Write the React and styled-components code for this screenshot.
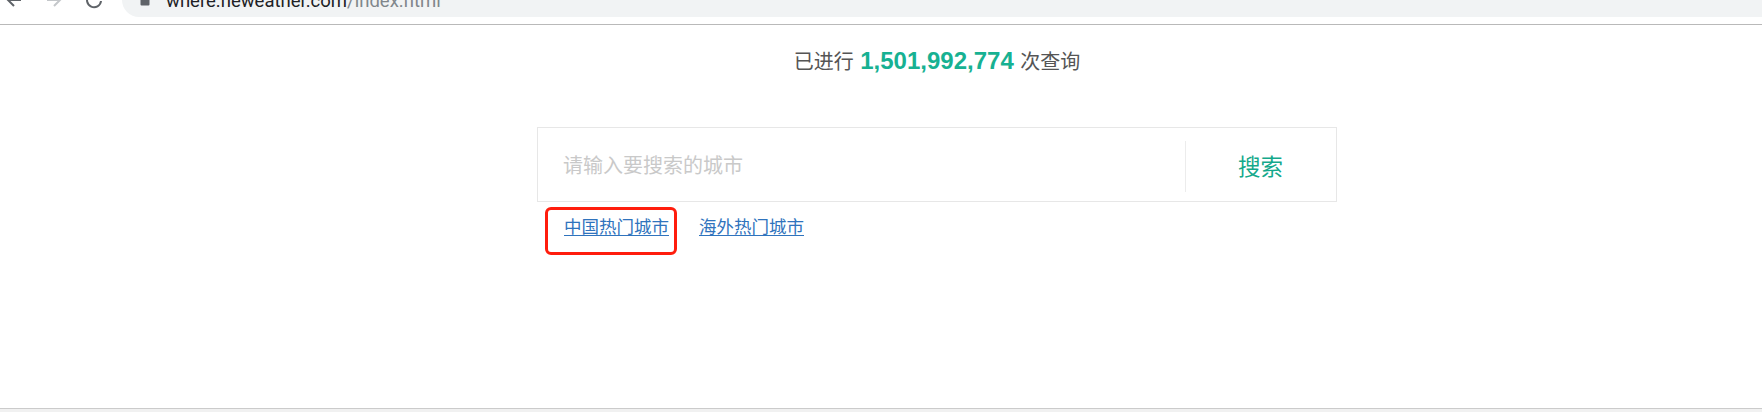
import React from 'react';
import styled, { createGlobalStyle } from 'styled-components';

const GlobalStyle = createGlobalStyle`
    html, body {
        margin: 0;
        padding: 0;
        background: #fff;
    }
    body {
        font-family: "Liberation Sans", "Noto Sans CJK SC", sans-serif;
        overflow: hidden;
    }
`;

const Page = styled.div`
    width: 1762px;
    height: 412px;
    display: flex;
    flex-direction: column;
    overflow: hidden;
`;

const Toolbar = styled.div`
    height: 24px;
    flex: none;
    display: flex;
    align-items: flex-start;
    background: #fff;
    border-bottom: 1px solid #b9b9b9;
    overflow: hidden;
`;

const NavIcon = styled.svg`
    flex: none;
    width: 18px;
    height: 18px;
    margin-top: -9px;
    margin-left: ${({ gap }) => gap}px;
`;

const Omnibox = styled.div`
    flex: 1;
    height: 34px;
    margin-top: -17px;
    margin-left: 19px;
    border-radius: 17px 0 0 17px;
    background: #f1f3f4;
    display: flex;
    align-items: flex-start;
    padding-left: 18px;
`;

const Lock = styled.svg`
    flex: none;
    width: 10px;
    height: 14px;
    margin-top: 9px;
`;

const Url = styled.div`
    margin-left: 16px;
    margin-top: 8px;
    font-family: Roboto, "Liberation Sans", sans-serif;
    font-size: 18.5px;
    line-height: 20px;
    color: #202124;
    white-space: nowrap;
`;

const UrlPath = styled.span`
    color: #80868b;
`;

const Main = styled.div`
    flex: 1;
    padding-top: 21px;
    padding-left: 537px;
`;

const Content = styled.div`
    width: 800px;
`;

const Counter = styled.div`
    text-align: center;
    font-size: 20px;
    line-height: 30px;
    color: #555;
`;

const Count = styled.b`
    font-size: 24px;
    font-weight: 700;
    color: #17b192;
    margin: 0 1px;
`;

const SearchBox = styled.div`
    margin-top: 50px;
    height: 73px;
    border: 1px solid #e7e7e7;
    display: flex;
    align-items: stretch;
`;

const Input = styled.input`
    flex: 1;
    border: none;
    outline: none;
    background: transparent;
    padding: 0 0 0 25px;
    font-family: "Noto Sans CJK SC", sans-serif;
    font-size: 20px;
    color: #333;
    &::placeholder {
        color: #c9c9c9;
    }
`;

const SearchButton = styled.button`
    position: relative;
    width: 151px;
    flex: none;
    border: none;
    background: transparent;
    font-family: "Noto Sans CJK SC", sans-serif;
    font-size: 22.5px;
    color: #14a88b;
    padding: 0;
    &::before {
        content: '';
        position: absolute;
        left: 0;
        top: 13px;
        bottom: 9px;
        border-left: 1px solid #ececec;
    }
`;

const Links = styled.div`
    margin-top: 12px;
    padding-left: 27px;
    display: flex;
    gap: 30px;
`;

const CityLink = styled.a`
    position: relative;
    font-family: "Noto Sans CJK SC", sans-serif;
    font-size: 17.5px;
    line-height: 24px;
    color: #2f73bd;
    text-decoration: underline;
    text-underline-offset: 2px;
    cursor: pointer;
`;

const Highlight = styled.span`
    position: absolute;
    left: -19px;
    right: -8px;
    top: -7px;
    bottom: -17px;
    border: 3px solid #ff1d0d;
    border-radius: 6px;
    pointer-events: none;
`;

const BottomBar = styled.div`
    height: 3px;
    flex: none;
    background: #f1f1f1;
    border-top: 1px solid #cbcbcb;
`;

const App = () => {
    return (
        <>
            <GlobalStyle />
            <Page>
                <Toolbar>
                    <NavIcon gap={5} viewBox="0 0 18 18">
                        <path d="M16 9H3M9 3L3 9l6 6" fill="none" stroke="#5f6368" strokeWidth="2" />
                    </NavIcon>
                    <NavIcon gap={22} viewBox="0 0 18 18">
                        <path d="M2 9h13M9 3l6 6-6 6" fill="none" stroke="#c4c7ca" strokeWidth="2" />
                    </NavIcon>
                    <NavIcon gap={22} viewBox="0 0 18 18">
                        <path d="M15 5.5A7 7 0 1 0 16 10" fill="none" stroke="#5f6368" strokeWidth="2" />
                        <path d="M16 1v6h-6z" fill="#5f6368" />
                    </NavIcon>
                    <Omnibox>
                        <Lock viewBox="0 0 10 14">
                            <path d="M2.5 6V4a2.5 2.5 0 0 1 5 0v2" fill="none" stroke="#5f6368" strokeWidth="1.6" />
                            <rect x="0.5" y="5.5" width="9" height="8" rx="1" fill="#5f6368" />
                        </Lock>
                        <Url>
                            where.neweather.com<UrlPath>/index.html</UrlPath>
                        </Url>
                    </Omnibox>
                </Toolbar>
                <Main>
                    <Content>
                        <Counter>
                            已进行 <Count>1,501,992,774</Count> 次查询
                        </Counter>
                        <SearchBox>
                            <Input placeholder="请输入要搜索的城市" />
                            <SearchButton>搜索</SearchButton>
                        </SearchBox>
                        <Links>
                            <CityLink>
                                中国热门城市
                                <Highlight />
                            </CityLink>
                            <CityLink>海外热门城市</CityLink>
                        </Links>
                    </Content>
                </Main>
                <BottomBar />
            </Page>
        </>
    );
};

export default App;
